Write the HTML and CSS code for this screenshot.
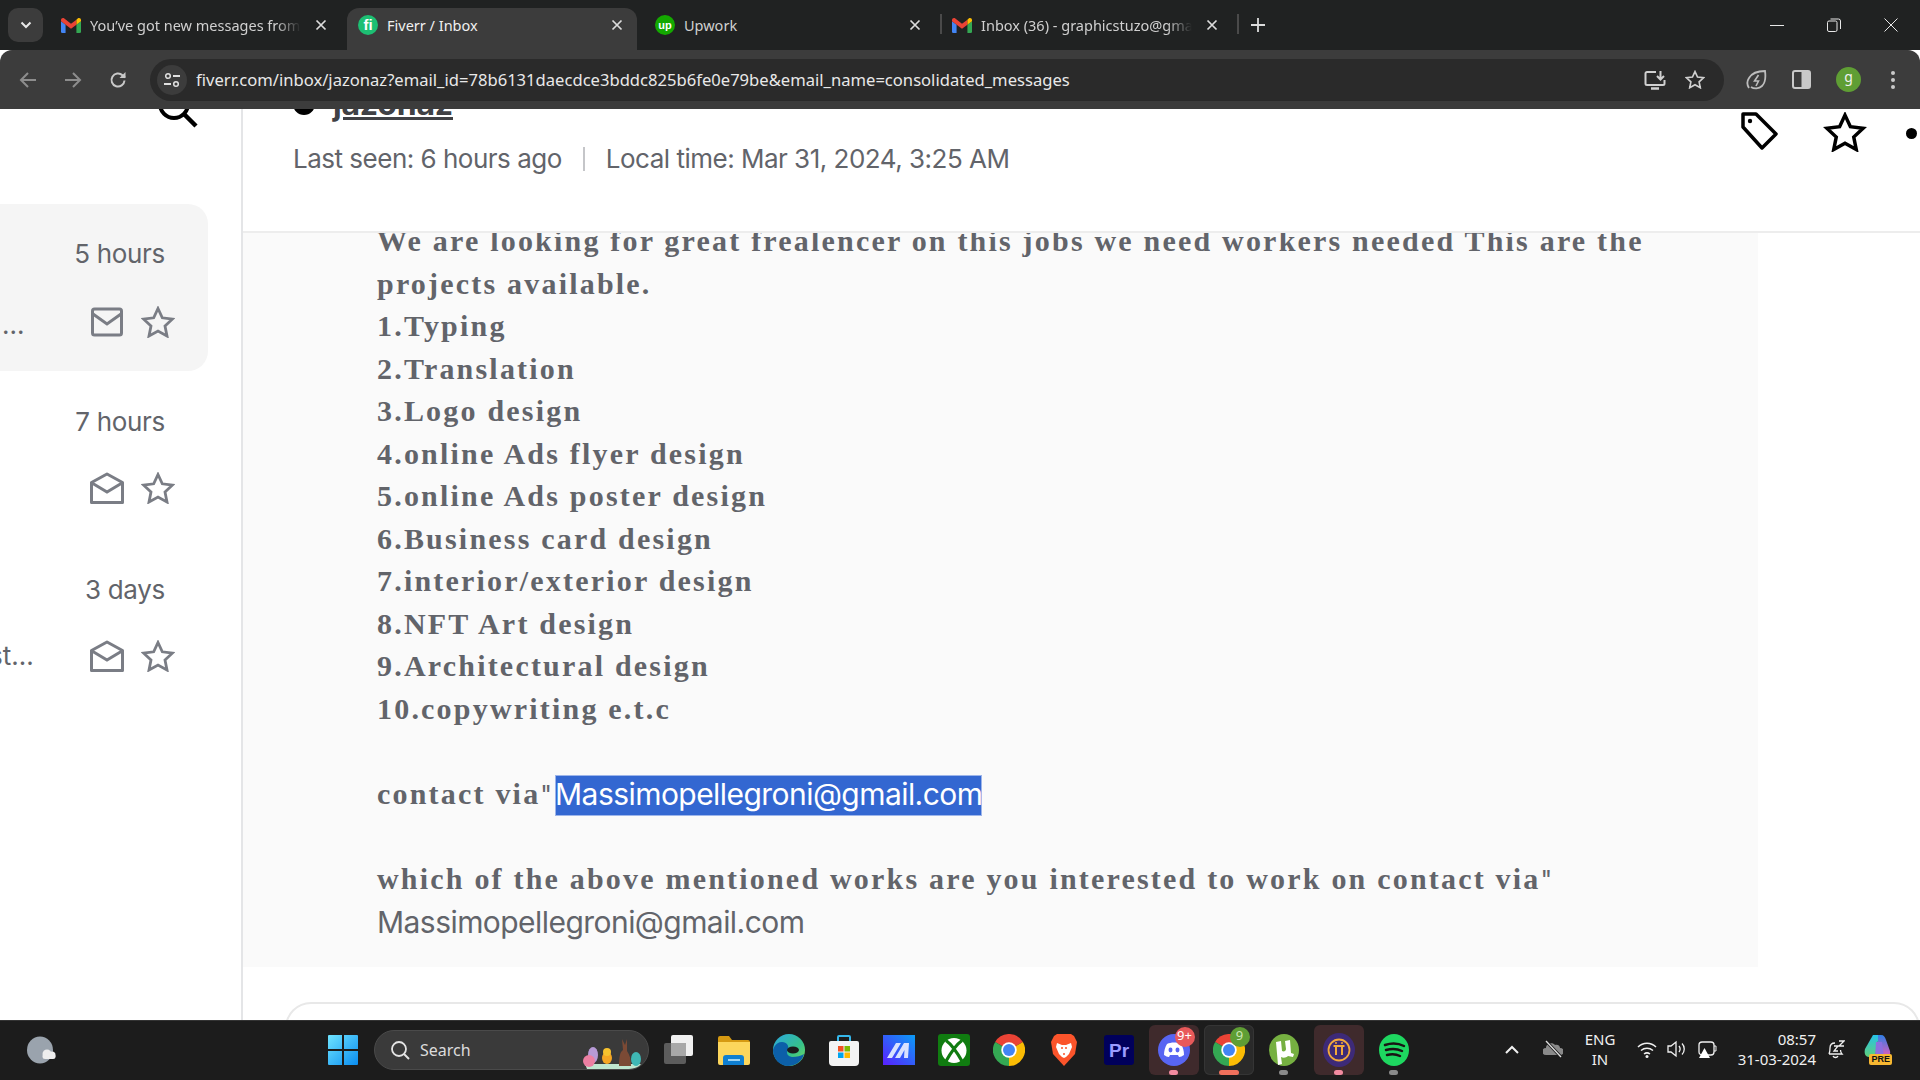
FILE: index.html
```html
<!DOCTYPE html>
<html lang="en">
<head>
<meta charset="utf-8">
<title>Fiverr / Inbox</title>
<link rel="stylesheet" href="styles.css">
</head>
<body>
<svg class="defs" width="0" height="0" aria-hidden="true">
  <defs>
    <symbol id="gmail" viewBox="0 0 24 18">
      <path fill="#4285f4" d="M0 16.5V4l5.5 4v10H1.5A1.5 1.5 0 0 1 0 16.5z"/>
      <path fill="#34a853" d="M24 16.5V4l-5.5 4v10h4a1.5 1.5 0 0 0 1.5-1.5z"/>
      <path fill="#ea4335" d="M0 2.5C0 .4 2.300-.6 4 .7L12 6.800 18.500 2v6L12 12.800 0 4z"/>
      <path fill="#fbbc04" d="M18.500 2L20 .7C21.700-.6 24 .4 24 2.500V4l-5.500 4z"/>
    </symbol>
    <symbol id="close" viewBox="0 0 12 12">
      <path d="M1.500 1.500l9 9m0-9l-9 9" fill="none" stroke="#dcdcdc" stroke-width="1.700"/>
    </symbol>
    <symbol id="star" viewBox="0 0 34 32">
      <path d="M17 2.500l4.300 9.300 10.200 1.200-7.500 7 2 10-9-5-9 5 2-10-7.500-7 10.200-1.200z" fill="none" stroke="currentColor" stroke-width="2.800" stroke-linejoin="miter"/>
    </symbol>
    <symbol id="mail-closed" viewBox="0 0 32 30">
      <rect x="1.500" y="2" width="29" height="26" rx="2" fill="none" stroke="currentColor" stroke-width="3"/>
      <path d="M2 7l14 10L30 7" fill="none" stroke="currentColor" stroke-width="3"/>
    </symbol>
    <symbol id="mail-open" viewBox="0 0 34 32">
      <path d="M1.500 10.500L17 2l15.500 8.500V30.500H1.500z" fill="none" stroke="currentColor" stroke-width="3" stroke-linejoin="round"/>
      <path d="M2 11l15 9 15-9" fill="none" stroke="currentColor" stroke-width="3"/>
    </symbol>
    <symbol id="chrome" viewBox="0 0 24 24">
      <path fill="#ea4335" d="M12 12L22.400 6A12 12 0 0 0 1.600 6z"/>
      <path fill="#fbbc04" d="M12 12L22.400 6A12 12 0 0 1 12 24z"/>
      <path fill="#34a853" d="M12 12L12 24A12 12 0 0 1 1.600 6z"/>
      <circle cx="12" cy="12" r="5.800" fill="#fff"/>
      <circle cx="12" cy="12" r="4.500" fill="#4285f4"/>
    </symbol>
    <linearGradient id="winblue" x1="0" y1="0" x2="1" y2="1">
      <stop offset="0" stop-color="#6fe4ff"/>
      <stop offset="1" stop-color="#0a8df0"/>
    </linearGradient>
    <linearGradient id="edgeg" x1="0" y1="0" x2="1" y2="1">
      <stop offset="0" stop-color="#2aa7e0"/>
      <stop offset=".6" stop-color="#36c28a"/>
      <stop offset="1" stop-color="#7fdc5a"/>
    </linearGradient>
    <linearGradient id="mango" x1="0" y1="1" x2="1" y2="0">
      <stop offset="0" stop-color="#5a1fff"/>
      <stop offset="1" stop-color="#0a9cf5"/>
    </linearGradient>
    <linearGradient id="copiA" x1="0" y1="0" x2="0" y2="1">
      <stop offset="0" stop-color="#27c2e8"/>
      <stop offset="1" stop-color="#5fd07a"/>
    </linearGradient>
    <linearGradient id="copiB" x1="0" y1="0" x2="0" y2="1">
      <stop offset="0" stop-color="#2f7fe6"/>
      <stop offset="1" stop-color="#e45cb8"/>
    </linearGradient>
  </defs>
</svg>

<div class="window">
  <header class="tabstrip">
    <button class="tabsearch">
      <svg width="12" height="8" viewBox="0 0 12 8"><path d="M1.500 1.500L6 6l4.500-4.500" fill="none" stroke="#e8e8e8" stroke-width="2"/></svg>
    </button>
    <div class="tab">
      <svg class="fav" width="20" height="15"><use href="#gmail"/></svg>
      <span class="tab-title fade">You’ve got new messages from</span>
      <svg class="tab-x" width="12" height="12"><use href="#close"/></svg>
    </div>
    <div class="tab active">
      <svg class="fav" width="20" height="20" viewBox="0 0 20 20"><circle cx="10" cy="10" r="10" fill="#1dbf73"/><text x="10" y="15" text-anchor="middle" class="fav-text">fi</text></svg>
      <span class="tab-title">Fiverr / Inbox</span>
      <svg class="tab-x" width="12" height="12"><use href="#close"/></svg>
    </div>
    <div class="tab">
      <svg class="fav" width="20" height="20" viewBox="0 0 20 20"><circle cx="10" cy="10" r="10" fill="#14a800"/><text x="10" y="13.500" text-anchor="middle" class="fav-up">up</text></svg>
      <span class="tab-title">Upwork</span>
      <svg class="tab-x" width="12" height="12"><use href="#close"/></svg>
    </div>
    <div class="tab sep">
      <svg class="fav" width="20" height="15"><use href="#gmail"/></svg>
      <span class="tab-title fade">Inbox (36) - graphicstuzo@gma</span>
      <svg class="tab-x" width="12" height="12"><use href="#close"/></svg>
    </div>
    <div class="newtab">
      <svg width="14" height="14" viewBox="0 0 14 14"><path d="M7 0v14M0 7h14" stroke="#dcdcdc" stroke-width="1.800"/></svg>
    </div>
    <div class="winctl">
      <svg width="14" height="14" viewBox="0 0 14 14"><path d="M0 7.500h14" stroke="#e8e8e8"/></svg>
      <svg width="14" height="14" viewBox="0 0 14 14"><rect x=".5" y="3" width="9.500" height="10.500" rx="1.500" fill="none" stroke="#e8e8e8"/><path d="M3.500 1h8a2 2 0 0 1 2 2v8" fill="none" stroke="#e8e8e8"/></svg>
      <svg width="14" height="14" viewBox="0 0 14 14"><path d="M.5.500l13 13m0-13l-13 13" stroke="#e8e8e8"/></svg>
    </div>
  </header>

  <nav class="toolbar">
    <svg class="nav-ic" width="18" height="18" viewBox="0 0 18 18"><path d="M17 9H2M9 2L2 9l7 7" fill="none" stroke="#8d8d8d" stroke-width="2"/></svg>
    <svg class="nav-ic" width="18" height="18" viewBox="0 0 18 18"><path d="M1 9h15M9 2l7 7-7 7" fill="none" stroke="#8d8d8d" stroke-width="2"/></svg>
    <svg class="nav-ic" width="18" height="18" viewBox="0 0 18 18"><path d="M15.500 9.500a6.500 6.500 0 1 1-2-5.200L16 6.500" fill="none" stroke="#c9c9c9" stroke-width="2"/><path d="M16.500 1v6h-6z" fill="#c9c9c9"/></svg>
    <div class="omnibox">
      <span class="tune">
        <svg width="16" height="16" viewBox="0 0 16 16"><circle cx="4" cy="4" r="2.300" fill="none" stroke="#e0e0e0" stroke-width="1.500"/><path d="M9 4h7M0 12h7" stroke="#e0e0e0" stroke-width="1.800"/><circle cx="12" cy="12" r="2.300" fill="none" stroke="#e0e0e0" stroke-width="1.500"/></svg>
      </span>
      <span class="url">fiverr.com/inbox/jazonaz?email_id=78b6131daecdce3bddc825b6fe0e79be&amp;email_name=consolidated_messages</span>
      <svg class="omni-ic" width="22" height="22" viewBox="0 0 22 22"><path d="M12 3H3a1.500 1.500 0 0 0-1.500 1.500v10A1.500 1.500 0 0 0 3 16h16a1.500 1.500 0 0 0 1.500-1.500V11" fill="none" stroke="#d0d0d0" stroke-width="2"/><path d="M7 19.500h8" stroke="#d0d0d0" stroke-width="2.500"/><path d="M16.500 2v8M13 7l3.500 3.500L20 7" fill="none" stroke="#d0d0d0" stroke-width="2"/></svg>
      <svg class="omni-ic star-ic" width="20" height="19"><use href="#star"/></svg>
    </div>
    <svg class="tool-ic leaf" width="22" height="22" viewBox="0 0 22 22"><path d="M3 19c-2-3-2-7 0-10 3-5 9-7 16-7 1 7 0 12-3 15-3 3-8 3-11 1" fill="none" stroke="#bdbdbd" stroke-width="1.800"/><path d="M12.500 6l-4 6h4l-2.500 5" fill="none" stroke="#bdbdbd" stroke-width="1.600"/></svg>
    <svg class="tool-ic panel" width="19" height="19" viewBox="0 0 19 19"><rect x="1" y="1" width="17" height="17" rx="2" fill="none" stroke="#c9c9c9" stroke-width="2"/><rect x="9.500" y="1" width="8.500" height="17" fill="#c9c9c9"/></svg>
    <span class="avatar">g</span>
    <svg class="tool-ic dots" width="4" height="18" viewBox="0 0 4 18"><circle cx="2" cy="2" r="2" fill="#c9c9c9"/><circle cx="2" cy="9" r="2" fill="#c9c9c9"/><circle cx="2" cy="16" r="2" fill="#c9c9c9"/></svg>
  </nav>

  <div class="page">
    <aside class="sidebar">
      <div class="side-top">
        <svg width="44" height="44" viewBox="0 0 44 44"><circle cx="18" cy="18" r="14" fill="none" stroke="#000" stroke-width="4"/><path d="M28 28l12 12" stroke="#000" stroke-width="4.500"/></svg>
      </div>
      <div class="conv current">
        <span class="when">5 hours</span>
        <div class="conv-foot">
          <span class="snippet">...</span>
          <svg class="ic-mail closed" width="32" height="30"><use href="#mail-closed"/></svg>
          <svg class="ic-star" width="34" height="32"><use href="#star"/></svg>
        </div>
      </div>
      <div class="conv">
        <span class="when">7 hours</span>
        <div class="conv-foot">
          <span class="snippet"></span>
          <svg class="ic-mail" width="34" height="32"><use href="#mail-open"/></svg>
          <svg class="ic-star" width="34" height="32"><use href="#star"/></svg>
        </div>
      </div>
      <div class="conv">
        <span class="when">3 days</span>
        <div class="conv-foot">
          <span class="snippet"><span class="clipped">st...</span></span>
          <svg class="ic-mail" width="34" height="32"><use href="#mail-open"/></svg>
          <svg class="ic-star" width="34" height="32"><use href="#star"/></svg>
        </div>
      </div>
    </aside>

    <main class="main">
      <section class="head">
        <div class="who">
          <div class="name-row"><span class="status"></span><span class="name">jazonaz</span></div>
          <div class="seen"><span>Last seen: 6 hours ago</span><span class="bar"></span><span>Local time: Mar 31, 2024, 3:25 AM</span></div>
        </div>
        <div class="actions">
          <svg class="act-tag" width="40" height="38" viewBox="0 0 40 38"><path d="M3 2h13l20 20-14 14L3 15z" fill="none" stroke="#000" stroke-width="3.500" stroke-linejoin="round"/><circle cx="10" cy="9" r="2.200" fill="#000"/></svg>
          <svg class="act-star" width="44" height="40"><use href="#star"/></svg>
          <span class="act-dot"></span>
        </div>
      </section>
      <article class="message">
        <p class="msg-text">We are looking for great frealencer on this jobs we need workers needed This are the projects available.</p>
        <p class="msg-text">1.Typing</p>
        <p class="msg-text">2.Translation</p>
        <p class="msg-text">3.Logo design</p>
        <p class="msg-text">4.online Ads flyer design</p>
        <p class="msg-text">5.online Ads poster design</p>
        <p class="msg-text">6.Business card design</p>
        <p class="msg-text">7.interior/exterior design</p>
        <p class="msg-text">8.NFT Art design</p>
        <p class="msg-text">9.Architectural design</p>
        <p class="msg-text">10.copywriting e.t.c</p>
        <p class="msg-text blank">&nbsp;</p>
        <p class="msg-text">contact via<span class="quote">&quot; </span><span class="sans selected">Massimopellegroni@gmail.com</span></p>
        <p class="msg-text blank">&nbsp;</p>
        <p class="msg-text">which of the above mentioned works are you interested to work on contact via<span class="quote">&quot; </span><span class="sans raised">Massimopellegroni@gmail.com</span></p>
      </article>
      <div class="composer"></div>
    </main>
  </div>

  <footer class="taskbar">
    <div class="weather">
      <svg width="30" height="28" viewBox="0 0 30 28"><ellipse cx="13" cy="14" rx="13" ry="13.500" fill="#9aa3ad"/><circle cx="20" cy="18" r="4.500" fill="#eee"/><circle cx="25" cy="19" r="3.500" fill="#eee"/><rect x="15.500" y="18" width="13" height="5" rx="2.500" fill="#eee"/></svg>
    </div>
    <div class="start">
      <svg width="30" height="30" viewBox="0 0 30 30"><path fill="url(#winblue)" d="M0 1a1 1 0 0 1 1-1h13v14H0zM16 0h13a1 1 0 0 1 1 1v13H16zM0 16h14v14H1a1 1 0 0 1-1-1zM16 16h14v13a1 1 0 0 1-1 1H16z"/></svg>
    </div>
    <div class="search">
      <svg width="20" height="20" viewBox="0 0 20 20"><circle cx="9" cy="9" r="7" fill="none" stroke="#e4e4e4" stroke-width="1.800"/><path d="M14 14l5 5" stroke="#e4e4e4" stroke-width="2"/></svg>
      <span class="search-label">Search</span>
      <svg class="easter" width="62" height="36" viewBox="0 0 62 36"><path d="M6 36h50l4-5H4z" fill="#bfe6cf"/><ellipse cx="12" cy="22" rx="5" ry="8" fill="#b79ad6"/><ellipse cx="8" cy="28" rx="6" ry="6" fill="#ec7fa2"/><ellipse cx="26" cy="25" rx="5" ry="6" fill="#f5a623"/><circle cx="26" cy="19" r="4" fill="#f7c22e"/><path d="M38 33c0-9 1-14 4-16l-1-11 3 6 2-6v12c3 4 4 9 4 15z" fill="#7b4a35"/><ellipse cx="55" cy="26" rx="5" ry="7" fill="#3fb8b5"/></svg>
    </div>
    <div class="apps">
      <div class="app">
        <svg width="30" height="30" viewBox="0 0 30 30"><rect x="0" y="8" width="22" height="21" rx="2" fill="#5c5c5c"/><rect x="7" y="0" width="22" height="21" rx="2" fill="#f0f0f0"/><rect x="7" y="8" width="15" height="13" fill="#a8a8a8"/></svg>
      </div>
      <div class="app">
        <svg width="32" height="30" viewBox="0 0 32 30"><path d="M0 3a2 2 0 0 1 2-2h9l3 4h16a2 2 0 0 1 2 2v1H0z" fill="#d69a12"/><path d="M0 7h32v21a2 2 0 0 1-2 2H2a2 2 0 0 1-2-2z" fill="#fcd65c"/><path d="M5 30v-7a3 3 0 0 1 3-3h15a3 3 0 0 1 3 3v7z" fill="#0f7fd1"/><rect x="10" y="24" width="12" height="2" fill="#9ed5f5"/></svg>
      </div>
      <div class="app">
        <svg width="32" height="32" viewBox="0 0 32 32"><circle cx="16" cy="16" r="16" fill="url(#edgeg)"/><path d="M31 20c-2 8-9 12-16 12C7 32 0 25 0 16c0 0 2-8 9-8 5 0 7 4 6 7-2 4-1 7 4 8 5 0 9-1 12-3z" fill="#0c5fa8"/><ellipse cx="20" cy="16" rx="6" ry="3.500" fill="#1b1b1b"/></svg>
      </div>
      <div class="app">
        <svg width="30" height="32" viewBox="0 0 30 32"><path d="M9 8V3a1 1 0 0 1 1-1h10a1 1 0 0 1 1 1v5" fill="none" stroke="#35b7ea" stroke-width="2"/><path d="M0 9a2 2 0 0 1 2-2h26a2 2 0 0 1 2 2v19a4 4 0 0 1-4 4H4a4 4 0 0 1-4-4z" fill="#f3f3f3"/><rect x="9" y="12" width="5.500" height="5.500" fill="#f25022"/><rect x="15.500" y="12" width="5.500" height="5.500" fill="#7fba00"/><rect x="9" y="18.500" width="5.500" height="5.500" fill="#00a4ef"/><rect x="15.500" y="18.500" width="5.500" height="5.500" fill="#ffb900"/></svg>
      </div>
      <div class="app">
        <svg width="32" height="30" viewBox="0 0 32 30"><rect width="32" height="30" fill="url(#mango)"/><path d="M4 23L13 8h5L9 23zM12 23l9-15h5l-1 15h-4l.5-8-4.500 8z" fill="#d9e2ff"/></svg>
      </div>
      <div class="app">
        <svg width="32" height="32" viewBox="0 0 32 32"><rect width="32" height="32" rx="3" fill="#107c10"/><circle cx="16" cy="16.500" r="12.500" fill="#fff"/><path d="M8 6.500C13 10 20 20 24.500 28M24 6.500C19 10 12 20 7.500 28" fill="none" stroke="#107c10" stroke-width="3.200"/></svg>
      </div>
      <div class="app">
        <svg width="32" height="32"><use href="#chrome"/></svg>
      </div>
      <div class="app">
        <svg width="26" height="32" viewBox="0 0 26 32"><path d="M6 0h14l3 2 3 6-2 12-11 12L2 20 0 8l3-6z" fill="#fb542b"/><path d="M6 9l5 2h4l5-2 1 4-3 7-3 3-2 1-2-1-3-3-3-7z" fill="#fff"/><path d="M10 14h2M14 14h2M13 19v2" stroke="#fb542b" stroke-width="1.500"/></svg>
      </div>
      <div class="app">
        <svg width="30" height="30" viewBox="0 0 30 30"><rect width="30" height="30" rx="3" fill="#00005b"/><text x="15" y="22" text-anchor="middle" class="pr">Pr</text></svg>
      </div>
      <div class="app opened discord">
        <svg width="32" height="32" viewBox="0 0 32 32"><circle cx="16" cy="16" r="16" fill="#5865f2"/><path d="M9 10c4-2 10-2 14 0 2 3 3 7 3 11-2 1-3 2-5 2l-1-2H12l-1 2c-2 0-3-1-5-2 0-4 1-8 3-11z" fill="#fff"/><ellipse cx="12.500" cy="16" rx="2" ry="2.400" fill="#5865f2"/><ellipse cx="19.500" cy="16" rx="2" ry="2.400" fill="#5865f2"/></svg>
        <span class="badge red">9+</span>
        <span class="pip pink"></span>
      </div>
      <div class="app active">
        <svg width="32" height="32"><use href="#chrome"/></svg>
        <span class="badge green">9</span>
        <span class="pip wide"></span>
      </div>
      <div class="app">
        <svg width="30" height="32" viewBox="0 0 30 32"><ellipse cx="15" cy="16" rx="15" ry="16" fill="#76b041"/><path d="M7 8l5-1 1 10c2 1 4 0 4-2l-1-8 5-1 1 13 3 1-1 3-5-1c-2 2-5 2-7 1l1 7-4 1z" fill="#fff"/></svg>
        <span class="pip"></span>
      </div>
      <div class="app opened">
        <svg width="32" height="34" viewBox="0 0 32 34"><ellipse cx="16" cy="17" rx="16" ry="17" fill="#3d2a78"/><circle cx="16" cy="17" r="10.500" fill="none" stroke="#f2a93b" stroke-width="1.800"/><path d="M10.500 13h11M13 13v9M19 13v9" stroke="#f2a93b" stroke-width="2"/><circle cx="13" cy="10" r="1" fill="#f2a93b"/><circle cx="19" cy="10" r="1" fill="#f2a93b"/></svg>
        <span class="pip pink"></span>
      </div>
      <div class="app">
        <svg width="30" height="32" viewBox="0 0 30 32"><ellipse cx="15" cy="16" rx="15" ry="16" fill="#1ed760"/><path d="M6 11c6-2 13-2 19 1M7 16c5-1.500 11-1.500 16 1M8 21c4-1 9-1 13 1" fill="none" stroke="#191414" stroke-width="2.500" stroke-linecap="round"/></svg>
        <span class="pip"></span>
      </div>
    </div>
    <div class="tray">
      <svg class="t-chev" width="14" height="9" viewBox="0 0 14 9"><path d="M1 8l6-6 6 6" fill="none" stroke="#f0f0f0" stroke-width="2"/></svg>
      <svg class="t-drive" width="20" height="20" viewBox="0 0 20 20"><path d="M3 16a3.500 3.500 0 0 1 0-7c0-5 7-6 9-3 3-1 5 1 5 3a3.500 3.500 0 0 1 0 7z" fill="#8a8a8a"/><path d="M3 2l15 16" stroke="#1c1c1c" stroke-width="3"/><path d="M3 2l15 16" stroke="#e0e0e0" stroke-width="1.300"/></svg>
      <div class="t-lang"><span>ENG</span><span>IN</span></div>
      <svg class="t-wifi" width="20" height="18" viewBox="0 0 20 18"><path d="M1 7c5-5 13-5 18 0M4 10.500c3.500-3 8.500-3 12 0M7 14c2-1.500 4-1.500 6 0" fill="none" stroke="#f0f0f0" stroke-width="1.500"/><circle cx="10" cy="16.500" r="1.500" fill="#f0f0f0"/></svg>
      <svg class="t-spk" width="20" height="18" viewBox="0 0 20 18"><path d="M1 6h3l5-4v14l-5-4H1z" fill="none" stroke="#f0f0f0" stroke-width="1.300"/><path d="M12 6c1.500 2 1.500 4 0 6M15 3.500c3 3 3 8 0 11" fill="none" stroke="#f0f0f0" stroke-width="1.300"/></svg>
      <svg class="t-batt" width="20" height="20" viewBox="0 0 20 20"><rect x="1" y="3" width="15" height="13" rx="3" fill="none" stroke="#f0f0f0" stroke-width="1.300"/><path d="M16 7h2v5h-2" fill="none" stroke="#f0f0f0"/><path d="M1 19l5.500-10L12 19z" fill="#fff"/></svg>
      <div class="t-clock"><span>08:57</span><span>31-03-2024</span></div>
      <svg class="t-bell" width="18" height="20" viewBox="0 0 18 20"><path d="M2 15c1-2 1-3 1-6 0-3 2-5 5-5M2 15h13c-1-1-1.500-2-1.500-4M6 17c1 2 4 2 5 0" fill="none" stroke="#f0f0f0" stroke-width="1.300"/><path d="M7 7h4l-4 5h4M12 2h5l-5 5h5" fill="none" stroke="#f0f0f0" stroke-width="1.300"/></svg>
      <div class="t-copilot">
        <svg width="28" height="24" viewBox="0 0 28 24"><path d="M9 1h6l-4 22H5C1 23 0 19 1 15z" fill="url(#copiA)"/><path d="M14 1h3c3 0 4 2 5 5l4 11c1 4-2 6-5 6h-7z" fill="url(#copiB)"/><path d="M12 8h6l2 15h-9z" fill="#8d6fe0"/></svg>
        <span class="pre">PRE</span>
      </div>
    </div>
  </footer>
</div>
</body>
</html>
```
FILE: styles.css
```css
* { box-sizing: border-box; }
html, body { margin: 0; padding: 0; height: 100%; overflow: hidden; }
body { font-family: "Noto Sans", "Open Sans", sans-serif; background: #fff; }
.defs { position: absolute; }
.window { display: flex; flex-direction: column; height: 100vh; overflow: hidden; }

/* tab strip */
.tabstrip { height: 50px; flex: none; display: flex; background: #202222; color: #e6e6e6; padding-left: 8px; }
.tabsearch { width: 35px; height: 34px; margin: 8px 7px 0 0; border: 0; border-radius: 10px; background: #3c3c3c; display: flex; align-items: center; justify-content: center; padding: 0; }
.tab { width: 297px; height: 42px; margin-top: 8px; display: flex; align-items: center; padding: 0 20px 8px 11px; font-size: 14.500px; position: relative; color: #d0d0d0; }
.tab.active { width: 290px; margin-right: 7px; padding-right: 14px; background: #3c3c3c; border-radius: 12px 12px 0 0; color: #f0f0f0; }
.tab.sep::before, .newtab::before { content: ""; position: absolute; left: -1px; top: 6px; height: 20px; width: 2px; background: #4a4a4a; }
.fav { flex: none; margin-right: 9px; }
.fav-text { font: 700 15px "Liberation Sans", sans-serif; fill: #fff; }
.fav-up { font: 700 11px "Liberation Sans", sans-serif; fill: #fff; }
.tab-title { flex: 1; min-width: 0; white-space: nowrap; overflow: hidden; margin-right: 14px; }
.tab-title.fade { -webkit-mask-image: linear-gradient(90deg, #000 88%, transparent 100%); mask-image: linear-gradient(90deg, #000 88%, transparent 100%); }
.tab-x { flex: none; }
.newtab { position: relative; width: 40px; height: 42px; margin-top: 8px; padding-bottom: 8px; display: flex; align-items: center; justify-content: center; }
.winctl { margin-left: auto; display: flex; align-items: center; gap: 43px; padding: 2px 22px 0 0; height: 48px; }

/* toolbar */
.toolbar { height: 59px; flex: none; background: #3c3c3c; border-radius: 12px 12px 0 0; display: flex; align-items: center; padding-left: 19px; }
.nav-ic { margin-right: 27px; flex: none; }
.nav-ic:nth-child(3) { margin-right: 23px; }
.omnibox { width: 1574px; height: 42px; background: #2a2a2a; border-radius: 21px; display: flex; align-items: center; padding: 0 0 0 7px; margin-right: 22px; color: #d0d0d0; flex: none; }
.tune { width: 30px; height: 30px; border-radius: 50%; background: #3c3c3c; display: flex; align-items: center; justify-content: center; flex: none; margin-right: 9px; }
.url { flex: 1; color: #e8e8e8; font-size: 16.600px; white-space: nowrap; overflow: hidden; }
.omni-ic { flex: none; }
.star-ic { margin: 0 19px 0 19px; }
.tool-ic { flex: none; }
.leaf { margin-right: 24px; }
.panel { margin-right: 25px; }
.avatar { width: 25px; height: 25px; border-radius: 50%; background: #5f9e34; color: #f0f0f0; font-size: 14px; line-height: 20px; text-align: center; flex: none; margin-right: 30px; }

/* page */
.page { flex: 1; min-height: 0; display: flex; overflow: hidden; background: #fff; }
.sidebar { width: 243px; flex: none; border-right: 2px solid #e4e5e7; height: 100%; overflow: hidden; }
.side-top { height: 123px; margin-top: -28px; display: flex; justify-content: flex-end; padding: 5px 41px 0 0; }
.side-top svg { margin-left: auto; }
.conv { width: 208px; height: 168px; padding: 0 43px 0 0; display: flex; flex-direction: column; align-items: flex-end; border-radius: 0 20px 20px 0; color: #62646a; }
.conv.current { background: #f5f5f5; height: 167px; margin-bottom: 1px; }
.when { font: 400 26px/32px Inter, Roboto, sans-serif; margin-top: 34px; letter-spacing: -.3px; }
.conv-foot { width: 100%; display: flex; align-items: center; margin-top: 34px; color: #7a7d85; }
.current .conv-foot { margin-top: 33px; }
.conv-foot svg { flex: none; }
.snippet { flex: 1; font: 400 26px/32px Inter, sans-serif; color: #62646a; white-space: nowrap; padding: 6px 0 0 2px; overflow: hidden; }
.clipped { display: block; margin-left: -13px; margin-top: -6px; }
.ic-mail { margin-right: 17px; }
.ic-mail.closed { margin-right: 18px; }
.ic-star { margin-right: -10px; }

.main { flex: 1; min-width: 0; display: flex; flex-direction: column; overflow: hidden; }
.head { height: 124px; flex: none; border-bottom: 2px solid #ededed; display: flex; background: #fff; position: relative; }
.who { flex: 1; padding-left: 50px; color: #62646a; }
.name-row { display: flex; align-items: center; margin-top: -25px; height: 40px; }
.status { width: 22px; height: 22px; border-radius: 50%; background: #000; margin-right: 18px; }
.name { font: 700 32px/40px Inter, Roboto, sans-serif; color: #404145; text-decoration: underline; letter-spacing: -.2px; }
.seen { display: flex; align-items: center; margin-top: 17px; font: 400 26px/36px Inter, Roboto, sans-serif; letter-spacing: -.5px; }
.bar { width: 2px; height: 24px; background: #c5c6c9; margin: 0 21px; }
.actions { display: flex; align-items: flex-start; padding-top: 3px; flex: none; color: #000; }
.act-tag { margin-right: 43px; }
.act-dot { width: 11px; height: 11px; border-radius: 50%; background: #000; margin: 16px 3px 0 39px; }

.message { width: 1515px; height: 734px; flex: none; background: #fafafa; padding-left: 134px; padding-right: 90px; overflow: hidden; color: #62646a; }
.msg-text { margin: 0; font: 700 30px/42.500px "Liberation Serif", serif; letter-spacing: 2.200px; }
.msg-text:first-child { margin-top: -13px; }
.quote { font: 400 25px/42px Inter, Roboto, sans-serif; letter-spacing: 0; }
.sans { font: 400 30px/42px Inter, Roboto, sans-serif; letter-spacing: -.55px; }
.sans.raised { vertical-align: 1px; }
.selected { background: #3367d1; color: #fff; display: inline-block; height: 41px; line-height: 38px; margin-left: -4px; vertical-align: bottom; box-shadow: 0 0 0 1px #9db5ea inset; }
.composer { height: 120px; flex: none; margin: 35px 0 0 42px; border: 2px solid #e8e8e8; border-radius: 26px; }

/* taskbar */
.taskbar { height: 60px; flex: none; display: flex; align-items: center; background: #1c1c1c; border-top: 1px solid #333; color: #f0f0f0; padding-bottom: 1px; }
.weather { width: 84px; flex: none; display: flex; justify-content: center; }
.start { width: 55px; margin-left: 231px; flex: none; display: flex; justify-content: center; }
.search { width: 275px; height: 40px; margin-left: 4px; flex: none; border-radius: 20px; background: #3a3a3a; border: 1px solid #4a4a4a; display: flex; align-items: center; padding: 0 5px 0 15px; overflow: hidden; }
.search-label { flex: 1; font-size: 16px; color: #dcdcdc; margin-left: 10px; }
.easter { flex: none; margin-top: 2px; }
.apps { display: flex; margin-left: 2px; flex: none; }
.app { width: 55px; height: 50px; position: relative; display: flex; align-items: center; justify-content: center; border-radius: 6px; }
.app.opened { background: #3f2a2c; width: 50px; margin: 0 2.500px; }
.app.active { background: #2a2a2a; box-shadow: inset 0 0 0 1px #353535; width: 50px; margin: 0 2.500px; }
.badge { position: absolute; font-size: 13px; line-height: 17px; text-align: center; border-radius: 50%; height: 20px; min-width: 20px; top: 2px; right: 4px; color: #fff; }
.badge.red { background: #e8595a; }
.badge.green { background: #5f9e34; color: #cde7b8; }
.pip { position: absolute; bottom: 0; left: 50%; width: 9px; height: 5px; margin-left: -4.500px; border-radius: 3px; background: #8a8a8a; }
.pip.pink { background: #f28ba0; }
.pip.wide { width: 20px; margin-left: -10px; background: #f0705c; }
.pr { font: 700 19px "Liberation Sans", sans-serif; fill: #9a9cff; }

.tray { display: flex; align-items: center; margin-left: 76px; flex: none; font-size: 15px; padding-bottom: 2px; }
.tray svg { flex: none; }
.t-chev { margin: 0 7px 0 8px; }
.t-drive { margin-left: 17px; }
.t-lang { width: 36px; margin-left: 19px; display: flex; flex-direction: column; align-items: center; line-height: 20px; }
.t-wifi { margin-left: 19px; }
.t-spk { margin-left: 10px; }
.t-batt { margin-left: 11px; }
.t-clock { width: 90px; margin-left: 8px; display: flex; flex-direction: column; align-items: flex-end; line-height: 20px; }
.t-bell { margin-left: 11px; }
.t-copilot { margin-left: 19px; position: relative; width: 28px; height: 30px; }
.pre { position: absolute; right: 0; bottom: -1px; background: #f7b731; color: #111; font: 700 9px/11px "Liberation Sans", sans-serif; padding: 0 2px; border-radius: 2px; }
```
